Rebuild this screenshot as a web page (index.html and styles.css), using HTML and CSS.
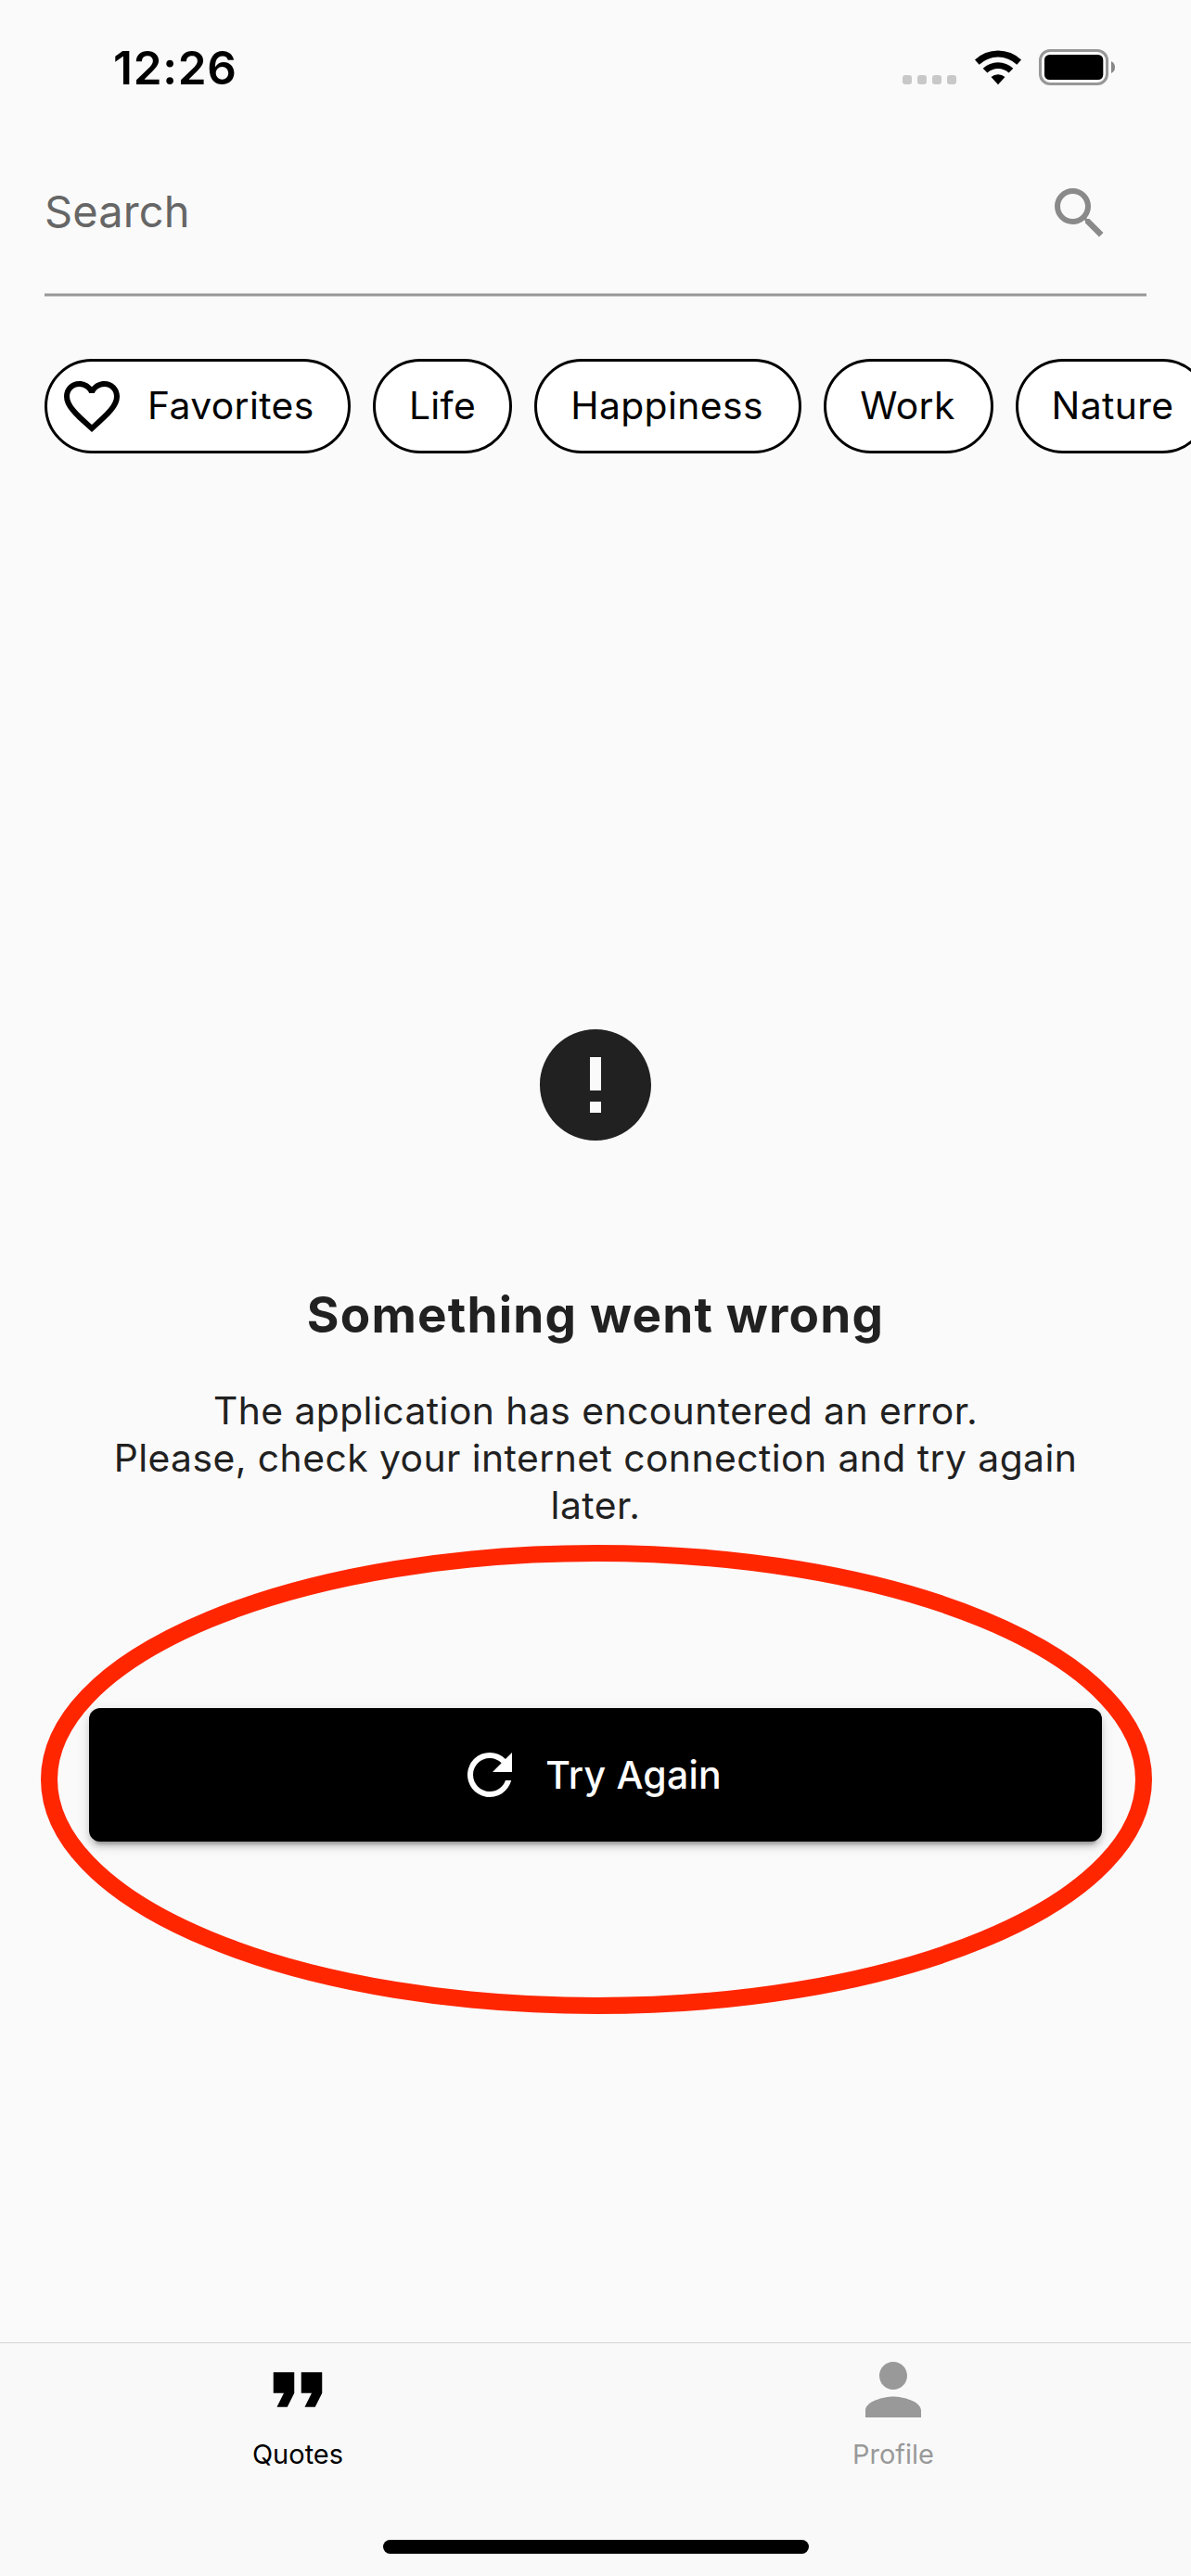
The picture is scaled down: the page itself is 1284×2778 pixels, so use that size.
FILE: index.html
```html
<!DOCTYPE html>
<html lang="en">
<head>
<meta charset="utf-8">
<title>Quotes</title>
<link rel="stylesheet" href="styles.css">
</head>
<body>
<div class="screen">
  <header class="status-bar">
    <span class="time">12:26</span>
    <span class="status-icons">
      <span class="dots"><i></i><i></i><i></i><i></i></span>
      <svg class="wifi" viewBox="0 0 50 38"><path d="M0 10.5A36 36 0 0 1 50 10.5L45.3 15.7A29.4 29.4 0 0 0 4.7 15.7Z"/><path d="M8.7 19.7A24 24 0 0 1 41.3 19.7L36.6 24.6A17.2 17.2 0 0 0 13.4 24.6Z"/><path d="M17.5 28.9A11.6 11.6 0 0 1 32.5 28.9L25 37.2Z"/></svg>
      <svg class="battery" viewBox="0 0 82 39"><rect x="1.5" y="1.5" width="72" height="36" rx="10.5" fill="none" stroke="#979797" stroke-width="3"/><rect x="6" y="6" width="63.3" height="27" rx="5.5"/><path d="M78 13q4 2 4 6.500q0 4.500-4 6.500Z" fill="#878787"/></svg>
    </span>
  </header>

  <div class="search">
    <span class="hint">Search</span>
    <svg class="icon" viewBox="0 0 24 24"><path d="M15.500 14h-.79l-.28-.27A6.471 6.471 0 0 0 16 9.500 6.500 6.500 0 1 0 9.500 16c1.610 0 3.090-.59 4.230-1.570l.27.28v.79l5 4.990L20.490 19l-4.990-5zm-6 0C7.010 14 5 11.990 5 9.500S7.010 5 9.500 5 14 7.010 14 9.500 11.990 14 9.500 14z"/></svg>
  </div>

  <div class="chips">
    <span class="chip with-icon"><svg class="icon" viewBox="0 0 24 24"><path d="M16.500 3c-1.740 0-3.410.81-4.500 2.090C10.910 3.810 9.240 3 7.500 3 4.420 3 2 5.420 2 8.500c0 3.780 3.400 6.860 8.550 11.540L12 21.350l1.450-1.320C18.600 15.360 22 12.280 22 8.500 22 5.420 19.580 3 16.500 3zm-4.400 15.550l-.1.100-.1-.1C7.140 14.240 4 11.390 4 8.500 4 6.500 5.500 5 7.500 5c1.540 0 3.040.99 3.570 2.360h1.870C13.460 5.990 14.960 5 16.500 5c2 0 3.500 1.500 3.500 3.500 0 2.890-3.140 5.740-7.900 10.050z"/></svg><span>Favorites</span></span>
    <span class="chip life">Life</span>
    <span class="chip happiness">Happiness</span>
    <span class="chip work">Work</span>
    <span class="chip nature">Nature</span>
  </div>

  <main class="error">
    <svg class="error-icon" viewBox="0 0 24 24"><path d="M12 2C6.480 2 2 6.480 2 12s4.480 10 10 10 10-4.480 10-10S17.520 2 12 2zm1 15h-2v-2h2v2zm0-4h-2V7h2v6z"/></svg>
    <h1>Something went wrong</h1>
    <p>The application has encountered an error.<br>Please, check your internet connection and try again<br>later.</p>
    <div class="action">
      <button class="retry"><svg class="icon" viewBox="0 0 24 24"><path d="M17.650 6.350A7.958 7.958 0 0 0 12 4a8 8 0 1 0 7.730 10h-2.080A5.990 5.990 0 0 1 12 18c-3.310 0-6-2.690-6-6s2.690-6 6-6c1.660 0 3.140.69 4.220 1.780L13 11h7V4l-2.350 2.350z"/></svg><span>Try Again</span></button>
      <svg class="marker" viewBox="0 0 1198 506"><ellipse cx="599" cy="253" rx="590" ry="244"/></svg>
    </div>
  </main>

  <nav class="tabs">
    <div class="tab active"><svg viewBox="0 0 24 24"><path d="M6 17h3l2-4V7H5v6h3l-2 4zm8 0h3l2-4V7h-6v6h3l-2 4z"/></svg><span>Quotes</span></div>
    <div class="tab"><svg viewBox="0 0 24 24"><path d="M12 12c2.210 0 4-1.790 4-4s-1.790-4-4-4-4 1.790-4 4 1.790 4 4 4zm0 2c-2.670 0-8 1.340-8 4v2h16v-2c0-2.660-5.330-4-8-4z"/></svg><span>Profile</span></div>
    <div class="home"></div>
  </nav>
</div>
</body>
</html>
```
FILE: styles.css
```css
* { box-sizing: border-box; }
body { margin: 0; background: #fafafa; font-family: Inter, "Liberation Sans", sans-serif; font-feature-settings: "calt" 0; }
svg { display: block; flex: none; }
.screen { width: 1284px; height: 2778px; overflow: hidden; display: flex; flex-direction: column; color: #000; }
.icon { width: 72px; height: 72px; fill: currentColor; }

.status-bar { height: 141px; flex: none; display: flex; justify-content: space-between; align-items: flex-start; padding: 43px 82px 0 122px; }
.time { font-size: 49.500px; line-height: 60px; font-weight: 600; letter-spacing: .7px; }
.status-icons { display: flex; align-items: flex-end; height: 49px; }
.dots { display: flex; gap: 6px; margin: 0 20px 1px 0; }
.dots i { width: 10px; height: 10px; border-radius: 3px; background: #c8c8c8; }
.wifi { width: 50px; height: 38px; margin-right: 19px; }
.battery { width: 82px; height: 39px; }

.search { height: 179px; flex: none; margin: 0 48px; padding: 53px 36px 0 0; display: flex; justify-content: space-between; background: linear-gradient(#c8c8c8 1px, #989898 1px 3px, #c8c8c8 3px) bottom / 100% 4px no-repeat; color: #8a8a8a; }
.hint { font-size: 47px; line-height: 68px; letter-spacing: .1px; color: #666; }

.chips { flex: none; display: flex; gap: 24px; padding: 67px 0 0 48px; height: 169px; }
.chip { flex: none; height: 102px; border: 3px solid #000; border-radius: 51px; background: #fff; display: flex; align-items: center; justify-content: center; font-size: 40.800px; line-height: 50px; letter-spacing: .4px; padding-bottom: 2px; }
.with-icon { width: 330px; justify-content: flex-start; padding: 0 0 0 12px; gap: 24px; }
.with-icon span { padding-bottom: 2px; }
.life { width: 150px; }
.happiness { width: 288px; padding-right: 2px; }
.work { width: 183px; padding-right: 2px; }
.nature { width: 209px; }

.error { flex: 1; display: flex; flex-direction: column; align-items: center; padding-top: 609px; color: #212121; }
.error-icon { width: 144px; height: 144px; fill: #212121; }
h1 { margin: 144px 0 0; font-size: 53px; line-height: 64px; font-weight: 700; letter-spacing: 1.200px; white-space: nowrap; }
p { margin: 46px 0 0; text-align: center; font-size: 40.800px; line-height: 51px; letter-spacing: .45px; white-space: nowrap; }
.action { position: relative; width: 1092px; margin-top: 193px; }
.retry { width: 100%; height: 144px; border: 0; border-radius: 12px; background: #000; color: #fff; display: flex; align-items: center; justify-content: center; gap: 24px; font: 500 41px/50px Inter, "Liberation Sans", sans-serif; letter-spacing: .2px; padding: 0 14px 0 0; box-shadow: 0 9px 3px -6px rgba(0,0,0,.2), 0 6px 6px rgba(0,0,0,.14), 0 3px 15px rgba(0,0,0,.12); }
.marker { position: absolute; left: -52px; top: -176px; width: 1198px; height: 506px; fill: none; stroke: #ff2600; stroke-width: 18px; pointer-events: none; }

.tabs { flex: none; height: 252px; border-top: 1px solid #d5d5d5; background: #f9f9f9; display: grid; grid-template-columns: 1fr 1fr; grid-template-rows: 207px 15px; padding-top: 5px; color: #999; fill: #999; }
.tab { display: flex; flex-direction: column; align-items: center; font-size: 29px; line-height: 36px; }
.tab svg { width: 90px; height: 90px; margin-bottom: 7px; }
.active { color: #000; fill: #000; }
.home { grid-column: 1 / 3; justify-self: center; width: 459px; height: 15px; border-radius: 8px; background: #000; }
```
